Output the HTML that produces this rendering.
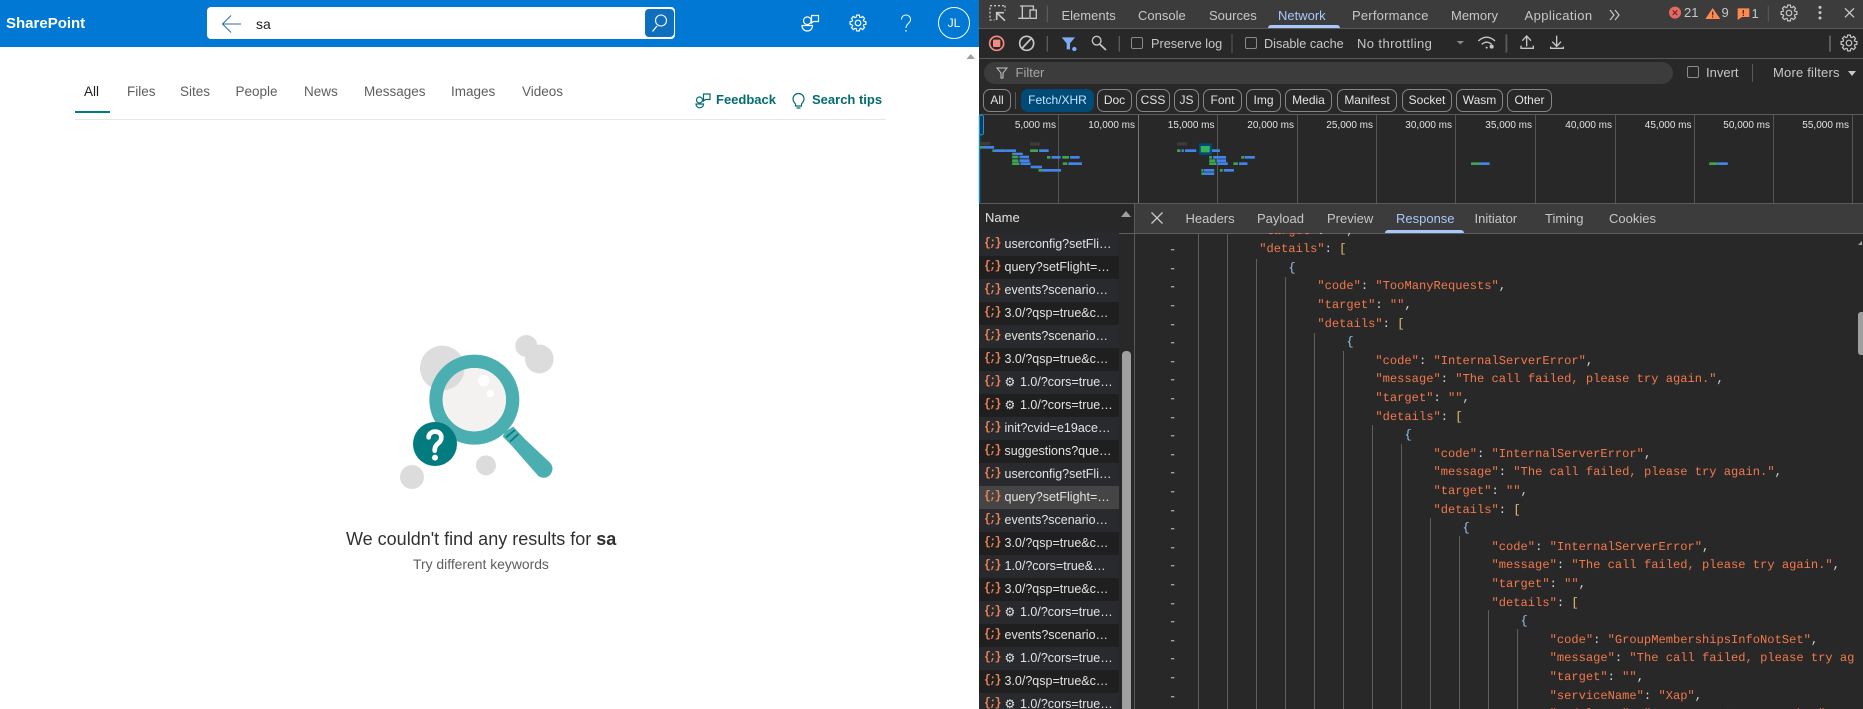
<!DOCTYPE html>
<html lang="en"><head><meta charset="utf-8"><title>SharePoint search</title>
<style>
html,body{margin:0;padding:0;width:1863px;height:709px;overflow:hidden;background:#fff;font-family:"Liberation Sans",sans-serif}
.a{position:absolute;display:block}
.t{position:absolute;white-space:nowrap;line-height:16px}
#dev{position:absolute;left:979px;top:0;width:884px;height:709px;background:#282828}
.d{color:#c7c7c7;font-size:13px}
.p{color:#605e5c;font-size:13.5px;top:84px}
.g{position:absolute;top:120px;width:57px;text-align:right;color:#e3e3e3;font-size:10px;white-space:nowrap;line-height:12px}
.c{position:absolute;top:89px;height:21px;border:1px solid #858585;border-radius:7px;color:#e3e3e3;font-size:12px;line-height:21px;text-align:center;white-space:nowrap;box-sizing:content-box}
.cb{position:absolute;width:10px;height:10px;border:1px solid #8a8a8a;border-radius:2px}
#list{position:absolute;left:979px;top:233px;width:140px;height:476px;overflow:hidden}
.r{position:relative;height:23px;line-height:23px;background:#292a2d;color:#e3e3e3;font-size:12.5px;white-space:nowrap;padding-left:25.5px}
.r.o{background:#1f1f1f}
.r.s{background:#454545}
.r i{position:absolute;left:5px;top:0;font:bold 11.5px/22px "Liberation Mono",monospace;color:#ee8155;letter-spacing:-1.6px}
.r b{font:normal 12px "DejaVu Sans",sans-serif;display:inline-block;width:15.5px;color:#e3e3e3}
#code{position:absolute;left:1135px;top:233px;width:722px;height:476px;overflow:hidden}
pre{position:absolute;margin:0;font:12.1px/18.6px "Liberation Mono",monospace;text-rendering:geometricPrecision}
#pc{left:37.2px;top:-11.3px;color:#f1784b}
#gt{left:34px;top:-10.3px;color:#c2d9f5}
#pc u{text-decoration:none;color:#d9d9d9}
#pc s{text-decoration:none;color:#e8c56d}
#pc em{font-style:normal;color:#9cc8f5}
</style></head><body>

<!-- SharePoint page -->
<div class="a" style="left:0;top:0;width:979px;height:47px;background:#0078d4"></div>
<div class="t" style="left:6px;top:16px;color:#fff;font-size:15px;font-weight:bold">SharePoint</div>
<div class="a" style="left:207px;top:7px;width:468px;height:32px;background:#fff;border-radius:4px"></div>
<div class="a" style="left:645px;top:9px;width:29px;height:28px;background:#106ebe;border-radius:4px"></div>
<div class="t" style="left:256px;top:16px;color:#201f1e;font-size:14px">sa</div>
<div class="t p" style="left:84px;color:#201f1e">All</div>
<div class="t p" style="left:127px">Files</div>
<div class="t p" style="left:180px">Sites</div>
<div class="t p" style="left:235.5px">People</div>
<div class="t p" style="left:304px">News</div>
<div class="t p" style="left:364px">Messages</div>
<div class="t p" style="left:451px">Images</div>
<div class="t p" style="left:522px">Videos</div>
<div class="a" style="left:75px;top:111px;width:35px;height:2px;background:#037c80"></div>
<div class="a" style="left:75px;top:119px;width:811px;height:1px;background:#e6e6e6"></div>
<div class="t" style="left:716px;top:92px;color:#036c70;font-size:13px;font-weight:bold">Feedback</div>
<div class="t" style="left:812px;top:92px;color:#036c70;font-size:13px;font-weight:bold">Search tips</div>
<div class="t" style="left:346px;top:529px;color:#323130;font-size:18px;line-height:20px">We couldn't find any results for <b>sa</b></div>
<div class="t" style="left:413px;top:556px;color:#605e5c;font-size:13.9px">Try different keywords</div>
<div class="t" style="left:938px;top:15px;width:32px;text-align:center;color:#fff;font-size:12px">JL</div>

<!-- DevTools -->
<div id="dev"></div>
<div class="a" style="left:979px;top:0;width:884px;height:28px;background:#3c3c3c"></div>
<div class="a" style="left:979px;top:28px;width:884px;height:1px;background:#5a5a5a"></div>
<div class="a" style="left:979px;top:58px;width:884px;height:1px;background:#5a5a5a"></div>
<div class="a" style="left:979px;top:114px;width:884px;height:1px;background:#5a5a5a"></div>
<div class="a" style="left:984px;top:62px;width:689px;height:22px;background:#3c3c3c;border-radius:11px"></div>
<div class="a" style="left:1268px;top:25px;width:72px;height:3px;background:#a8c7fa;border-radius:3px 3px 0 0"></div>

<div class="t d" style="left:1061.5px;top:8px">Elements</div>
<div class="t d" style="left:1138px;top:8px">Console</div>
<div class="t d" style="left:1209px;top:8px">Sources</div>
<div class="t d" style="left:1278px;top:8px;color:#a8c7fa">Network</div>
<div class="t d" style="left:1352px;top:8px;letter-spacing:.2px">Performance</div>
<div class="t d" style="left:1451px;top:8px">Memory</div>
<div class="t d" style="left:1524.5px;top:8px;letter-spacing:.4px">Application</div>
<div class="t d" style="left:1684px;top:5px">21</div>
<div class="t d" style="left:1721.5px;top:5px">9</div>
<div class="t d" style="left:1751.5px;top:6px">1</div>

<div class="cb" style="left:1131px;top:37px"></div>
<div class="t d" style="left:1151px;top:36px;font-size:12.7px">Preserve log</div>
<div class="cb" style="left:1244.5px;top:37px"></div>
<div class="t d" style="left:1264px;top:36px;font-size:12.7px">Disable cache</div>
<div class="t d" style="left:1357px;top:36px;letter-spacing:.4px">No throttling</div>

<div class="t d" style="left:1015.5px;top:65px;color:#a6a6a6">Filter</div>
<div class="cb" style="left:1687px;top:66px"></div>
<div class="t d" style="left:1706px;top:65px">Invert</div>
<div class="t d" style="left:1773px;top:65px;letter-spacing:.2px">More filters</div>

<div class="c" style="left:983px;width:26px">All</div>
<div class="c" style="left:1021px;width:71px;background:#004a77;border-color:#004a77;color:#c2e7ff">Fetch/XHR</div>
<div class="c" style="left:1097px;width:33px">Doc</div>
<div class="c" style="left:1136px;width:32px">CSS</div>
<div class="c" style="left:1174px;width:23px">JS</div>
<div class="c" style="left:1203px;width:37px">Font</div>
<div class="c" style="left:1246px;width:33px">Img</div>
<div class="c" style="left:1285px;width:45px">Media</div>
<div class="c" style="left:1337px;width:58px">Manifest</div>
<div class="c" style="left:1402px;width:48px">Socket</div>
<div class="c" style="left:1456px;width:45px">Wasm</div>
<div class="c" style="left:1507px;width:43px">Other</div>

<div class="g" style="left:999px">5,000 ms</div>
<div class="g" style="left:1078px">10,000 ms</div>
<div class="g" style="left:1157.5px">15,000 ms</div>
<div class="g" style="left:1237px">20,000 ms</div>
<div class="g" style="left:1316px">25,000 ms</div>
<div class="g" style="left:1395px">30,000 ms</div>
<div class="g" style="left:1475px">35,000 ms</div>
<div class="g" style="left:1555px">40,000 ms</div>
<div class="g" style="left:1634.5px">45,000 ms</div>
<div class="g" style="left:1713px">50,000 ms</div>
<div class="g" style="left:1792px">55,000 ms</div>

<div class="a" style="left:1135px;top:204px;width:728px;height:29px;background:#3c3c3c"></div>
<div class="a" style="left:979px;top:203px;width:884px;height:1px;background:#5a5a5a"></div>
<div class="a" style="left:979px;top:233px;width:884px;height:1px;background:#5f5f5f"></div>
<div class="a" style="left:1385px;top:230px;width:79px;height:3px;background:#a8c7fa;border-radius:3px 3px 0 0"></div>
<div class="t" style="left:985px;top:210px;color:#e3e3e3;font-size:13px">Name</div>
<div class="t d" style="left:1185.5px;top:211px">Headers</div>
<div class="t d" style="left:1257px;top:211px">Payload</div>
<div class="t d" style="left:1327px;top:211px">Preview</div>
<div class="t d" style="left:1396px;top:211px;color:#a8c7fa">Response</div>
<div class="t d" style="left:1474.5px;top:211px">Initiator</div>
<div class="t d" style="left:1545px;top:211px">Timing</div>
<div class="t d" style="left:1609px;top:211px">Cookies</div>

<div id="list">
<div class="r"><i>{;}</i>userconfig?setFli…</div>
<div class="r o"><i>{;}</i>query?setFlight=…</div>
<div class="r"><i>{;}</i>events?scenario…</div>
<div class="r o"><i>{;}</i>3.0/?qsp=true&amp;c…</div>
<div class="r"><i>{;}</i>events?scenario…</div>
<div class="r o"><i>{;}</i>3.0/?qsp=true&amp;c…</div>
<div class="r"><i>{;}</i><b>⚙</b>1.0/?cors=true…</div>
<div class="r o"><i>{;}</i><b>⚙</b>1.0/?cors=true…</div>
<div class="r"><i>{;}</i>init?cvid=e19ace…</div>
<div class="r o"><i>{;}</i>suggestions?que…</div>
<div class="r"><i>{;}</i>userconfig?setFli…</div>
<div class="r s"><i>{;}</i>query?setFlight=…</div>
<div class="r"><i>{;}</i>events?scenario…</div>
<div class="r o"><i>{;}</i>3.0/?qsp=true&amp;c…</div>
<div class="r"><i>{;}</i>1.0/?cors=true&amp;…</div>
<div class="r o"><i>{;}</i>3.0/?qsp=true&amp;c…</div>
<div class="r"><i>{;}</i><b>⚙</b>1.0/?cors=true…</div>
<div class="r o"><i>{;}</i>events?scenario…</div>
<div class="r"><i>{;}</i><b>⚙</b>1.0/?cors=true…</div>
<div class="r o"><i>{;}</i>3.0/?qsp=true&amp;c…</div>
<div class="r"><i>{;}</i><b>⚙</b>1.0/?cors=true…</div>
</div>
<div class="a" style="left:1122px;top:351px;width:9px;height:358px;background:#a0a0a0;border-radius:4px 4px 0 0"></div>
<div class="a" style="left:1134px;top:204px;width:1px;height:505px;background:#5a5a5a"></div>

<div id="code">
<pre id="gt">-
-
-
-
-
-
-
-
-
-
-
-
-
-
-
-
-
-
-
-
-
-
-
-
-
-
-</pre>
<pre id="pc">            "target"<u>:</u> ""<u>,</u>
            "details"<u>:</u> <s>[</s>
                <em>{</em>
                    "code"<u>:</u> "TooManyRequests"<u>,</u>
                    "target"<u>:</u> ""<u>,</u>
                    "details"<u>:</u> <s>[</s>
                        <em>{</em>
                            "code"<u>:</u> "InternalServerError"<u>,</u>
                            "message"<u>:</u> "The call failed, please try again."<u>,</u>
                            "target"<u>:</u> ""<u>,</u>
                            "details"<u>:</u> <s>[</s>
                                <em>{</em>
                                    "code"<u>:</u> "InternalServerError"<u>,</u>
                                    "message"<u>:</u> "The call failed, please try again."<u>,</u>
                                    "target"<u>:</u> ""<u>,</u>
                                    "details"<u>:</u> <s>[</s>
                                        <em>{</em>
                                            "code"<u>:</u> "InternalServerError"<u>,</u>
                                            "message"<u>:</u> "The call failed, please try again."<u>,</u>
                                            "target"<u>:</u> ""<u>,</u>
                                            "details"<u>:</u> <s>[</s>
                                                <em>{</em>
                                                    "code"<u>:</u> "GroupMembershipsInfoNotSet"<u>,</u>
                                                    "message"<u>:</u> "The call failed, please try ag
                                                    "target"<u>:</u> ""<u>,</u>
                                                    "serviceName"<u>:</u> "Xap"<u>,</u>
                                                    "modelName"<u>:</u> "Generator.Groups.Lookup"</pre>
</div>
<div class="a" style="left:1858px;top:312px;width:5px;height:43px;background:#9e9e9e;border-radius:3px 0 0 3px"></div>

<!-- graphics layer -->
<svg class="a" style="left:0;top:0" width="1863" height="709" viewBox="0 0 1863 709" fill="none">
<defs>
<g id="gear"><g id="gt4"><path id="tooth" d="M-1.75-5.74L-1.39-7.88L1.39-7.88L1.75-5.74L2.82-5.3"/><use href="#tooth" transform="rotate(45)"/><use href="#tooth" transform="rotate(90)"/><use href="#tooth" transform="rotate(135)"/></g><use href="#gt4" transform="rotate(180)"/><circle r="2.8"/></g>
<clipPath id="glass"><circle cx="283" cy="239" r="95"/></clipPath>
</defs>

<!-- search bar icons -->
<path d="M241 24H223M231 15.500L222.500 24L231 32.500" stroke="#2b6ca3" stroke-width="1"/>
<circle cx="661" cy="20.500" r="5.500" stroke="#fff" stroke-width="1.100"/><path d="M657 26L652.500 31.500" stroke="#fff" stroke-width="1.200"/>
<!-- header icons -->
<g stroke="#fff" stroke-width="1.200">
<circle cx="807.300" cy="20.700" r="3.800"/><path d="M802 25.500H812.500C812.500 29 810 31 807.300 31C804.500 31 802 29 802 25.500Z"/><path d="M811 15.500H818.500V21.500H813.500L811.500 23V15.500Z"/>
<use href="#gear" transform="translate(858,23)"/>
<circle cx="954" cy="23" r="15.500" stroke-width="1"/>
<path d="M901.500 19.500C901.500 13.500 910.500 13.500 910.500 19.500C910.500 23.500 906 23.500 906 28" stroke-width="1"/>
</g>
<circle cx="906" cy="30.800" r=".8" fill="#fff"/>
<path d="M966.500 59L970.700 54L975 59Z" fill="#a0a0a0"/>
<!-- page feedback and bulb -->
<g stroke="#036c70" stroke-width="1.200">
<circle cx="699.500" cy="100" r="3"/><path d="M696 104H703.500C703.500 106.500 701.500 107.800 699.700 107.800C698 107.800 696 106.500 696 104Z"/><path d="M703 94H710V99.500H705.500L703.500 101V94Z"/>
<path d="M795.500 104C793.500 102 793 100.500 793 98.800C793 95.800 795.500 93.500 798.500 93.500C801.500 93.500 804 95.800 804 98.800C804 100.500 803.500 102 801.500 104V106H795.500ZM796.500 108H800.500"/>
</g>

<!-- illustration -->
<g transform="translate(380,320) scale(.33333)">
<g fill="#c8c6c6" opacity=".6"><circle cx="187" cy="144" r="67"/><circle cx="439" cy="78" r="33"/><circle cx="478" cy="117" r="43"/><circle cx="318" cy="436" r="30"/><circle cx="96" cy="471" r="36"/></g>
<path d="M375 335L400 320L430 352L396 378L368 350Z" fill="#4bafb2"/>
<path d="M396 378L428 351L510 428Q525 445 510 465Q495 480 475 468Z" fill="#4bafb2"/>
<path d="M378 352L405 330M390 365L415 342" stroke="#037c80" stroke-width="5"/>
<circle cx="283" cy="239" r="115" stroke="#4bafb2" stroke-width="40"/>
<circle cx="283" cy="239" r="95" fill="#f3f2f1"/>
<circle cx="187" cy="144" r="67" fill="#dcdbdb" clip-path="url(#glass)"/>
<circle cx="311" cy="182" r="17" fill="#fff"/><circle cx="331" cy="221" r="11" fill="#fff"/>
<circle cx="165" cy="372" r="66" fill="#037c80"/>
<path d="M146 352C146 330 184 328 184 352C184 372 164 368 164 392" stroke="#fff" stroke-width="14" stroke-linecap="round"/>
<circle cx="165" cy="413" r="9" fill="#fff"/>
</g>

<!-- devtools top-left icons -->
<g transform="translate(960,0) scale(.33333)" stroke="#c7c7c7" stroke-width="4">
<path d="M132 17H90V60H104" stroke-dasharray="6 6"/><path d="M135 17V32" stroke-dasharray="6 6"/>
<path d="M132 38H110V60M110 38L135 62" stroke-width="5"/>
<path d="M180 18H220V28M187 18V54M175 55H207"/><rect x="210" y="30" width="19" height="25"/>
<path d="M262 17V66" stroke="#5a5a5a"/>
<circle cx="110" cy="130" r="21" stroke="#f28b82" stroke-width="5"/><rect x="99" y="119" width="22" height="22" rx="3" fill="#f28b82" stroke="none"/>
<circle cx="200" cy="130" r="21" stroke-width="5"/><path d="M185 146L215 114" stroke-width="5"/>
<path d="M262 108V155M478 108V155" stroke="#5a5a5a"/>
<path d="M305 112H345L330 130V148H320V130Z" fill="#7cacf8" stroke="none"/><circle cx="343" cy="147" r="6.500" fill="#7cacf8" stroke="none"/>
<circle cx="410" cy="122" r="13"/><path d="M420 133L438 150" stroke-width="5"/>
</g>
<!-- devtools top-right icons -->
<g transform="translate(1660,0) scale(.33333)">
<circle cx="45" cy="38" r="18" fill="#e46962"/><path d="M38 31L52 45M52 31L38 45" stroke="#5c2220" stroke-width="3"/>
<path d="M158 24L181 57H136Z" fill="#ff8a50"/><path d="M158 35V46M158 49V53" stroke="#4a2a1a" stroke-width="4"/>
<path d="M233 25H268V51H246L233 60Z" fill="#ff8a50"/><path d="M250 30V41M250 44V48" stroke="#4a2a1a" stroke-width="4"/>
<path d="M325 17V65" stroke="#5a5a5a" stroke-width="3"/>
<circle cx="480" cy="22" r="4.500" fill="#c7c7c7"/><circle cx="480" cy="38" r="4.500" fill="#c7c7c7"/><circle cx="480" cy="54" r="4.500" fill="#c7c7c7"/>
<path d="M555 25L582 52M582 25L555 52" stroke="#c7c7c7" stroke-width="4"/>
<path d="M510 107V155" stroke="#777" stroke-width="4"/>
</g>
<g stroke="#c7c7c7" stroke-width="1.200"><use href="#gear" transform="translate(1789,13)"/><use href="#gear" transform="translate(1849,43)"/></g>
<path d="M1610 10L1614 15L1610 20M1615 10L1619 15L1615 20" stroke="#c7c7c7" stroke-width="1.200"/>
<!-- toolbar right part -->
<g transform="translate(1440,25) scale(.33333)" stroke="#c7c7c7" stroke-width="4">
<path d="M50 48H72L61 58Z" fill="#8a8a8a" stroke="none"/>
<path d="M115 48Q140 25 165 48M125 58Q140 45 155 58"/><circle cx="140" cy="68" r="3" fill="#c7c7c7" stroke="none"/><circle cx="155" cy="65" r="6" fill="#c7c7c7" stroke="none"/>
<path d="M200 30V80" stroke="#5a5a5a"/>
<path d="M260 36V64M247 47L260 33L273 47M243 62V70H280V62"/>
<path d="M350 32V62M337 50L350 64L363 50M332 65V70H370V65"/>
</g>
<path d="M1232 34V53M1506 34V53" stroke="#5a5a5a"/>
<path d="M997 68H1007L1003 73V78H1001V73Z" stroke="#c7c7c7"/>
<path d="M1752.500 64V82M1015.500 92V109" stroke="#5a5a5a"/>
<path d="M1848 71H1856L1852 76Z" fill="#c7c7c7"/>
<path d="M1121 217L1126 211L1131 217Z" fill="#a0a0a0"/>
<path d="M1151.500 212.500L1162.500 223.500M1162.500 212.500L1151.500 223.500" stroke="#c7c7c7" stroke-width="1.300"/>
<path d="M1858 245L1862 241V245Z" fill="#a0a0a0"/>

<!-- overview grid -->
<g stroke="#555"><path d="M1058.500 115V203M1217.500 115V203M1297.500 115V203M1376.500 115V203M1455.500 115V203M1535.500 115V203M1615.500 115V203M1694.500 115V203M1773.500 115V203M1852.500 115V203"/><path d="M1138.500 115V203" stroke="#777"/></g>
<path d="M979.500 115V203" stroke="#0b8ad0" stroke-width="1.400"/>
<rect x="979.500" y="115" width="4" height="20" rx="2" fill="#003f66" stroke="#2f8fce" stroke-width="1"/>
<!-- waterfall bars -->
<g transform="translate(980,110) scale(.5631,.33333)">
<g fill="#3c3c3c"><rect x="0" y="96" width="18" height="10"/><rect x="89" y="97" width="18" height="10"/><rect x="350" y="97" width="18" height="10"/></g>
<rect x="389" y="100" width="23" height="35" rx="3" fill="#004a77"/><rect x="392" y="108" width="16" height="19" fill="#34b35c"/>
<g fill="#3fa34f"><rect x="0" y="108" width="5" height="8"/><rect x="22" y="118" width="3" height="8"/><rect x="89" y="118" width="14" height="8"/><rect x="350" y="118" width="6" height="8"/>
<rect x="57" y="128" width="3" height="7"/><rect x="57" y="137" width="11" height="8"/><rect x="119" y="138" width="6" height="8"/><rect x="146" y="138" width="12" height="8"/><rect x="407" y="138" width="5" height="8"/><rect x="464" y="138" width="5" height="8"/>
<rect x="57" y="148" width="11" height="8"/><rect x="407" y="148" width="11" height="8"/>
<rect x="57" y="157" width="13" height="8"/><rect x="147" y="157" width="8" height="8"/><rect x="407" y="157" width="13" height="8"/><rect x="450" y="157" width="8" height="8"/><rect x="872" y="157" width="15" height="8"/><rect x="1295" y="157" width="15" height="8"/>
<rect x="104" y="177" width="6" height="8"/><rect x="393" y="177" width="3" height="8"/><rect x="426" y="177" width="5" height="8"/><rect x="393" y="187" width="4" height="8"/></g>
<g fill="#4285e8"><rect x="5" y="108" width="20" height="8"/><rect x="25" y="118" width="20" height="8"/><rect x="45" y="118" width="19" height="8"/><rect x="105" y="118" width="17" height="8"/><rect x="358" y="118" width="4" height="8"/><rect x="364" y="118" width="20" height="8"/><rect x="412" y="118" width="14" height="8"/>
<rect x="60" y="128" width="16" height="7"/><rect x="70" y="137" width="17" height="8"/><rect x="127" y="138" width="16" height="8"/><rect x="160" y="138" width="17" height="8"/><rect x="414" y="138" width="23" height="8"/><rect x="470" y="138" width="18" height="8"/>
<rect x="70" y="148" width="18" height="8"/><rect x="420" y="148" width="17" height="8"/>
<rect x="72" y="157" width="18" height="8"/><rect x="157" y="157" width="24" height="8"/><rect x="422" y="157" width="18" height="8"/><rect x="460" y="157" width="15" height="8"/><rect x="887" y="157" width="18" height="8"/><rect x="1310" y="157" width="18" height="8"/>
<rect x="90" y="167" width="20" height="8"/><rect x="110" y="177" width="34" height="8"/><rect x="397" y="177" width="19" height="8"/><rect x="433" y="177" width="18" height="8"/><rect x="397" y="187" width="19" height="8"/></g>
</g>

<!-- code guides -->
<g stroke="#5f5f5f"><path d="M1198.500 234V709M1227.500 234V709M1256.500 259V709M1285.500 277V709M1314.500 333V709M1343.500 351V709M1372.500 425V709M1401.500 444V709M1430.500 518V709M1459.500 536V709M1488.500 610V709M1517.500 629V709"/></g>
</svg>
</body></html>
